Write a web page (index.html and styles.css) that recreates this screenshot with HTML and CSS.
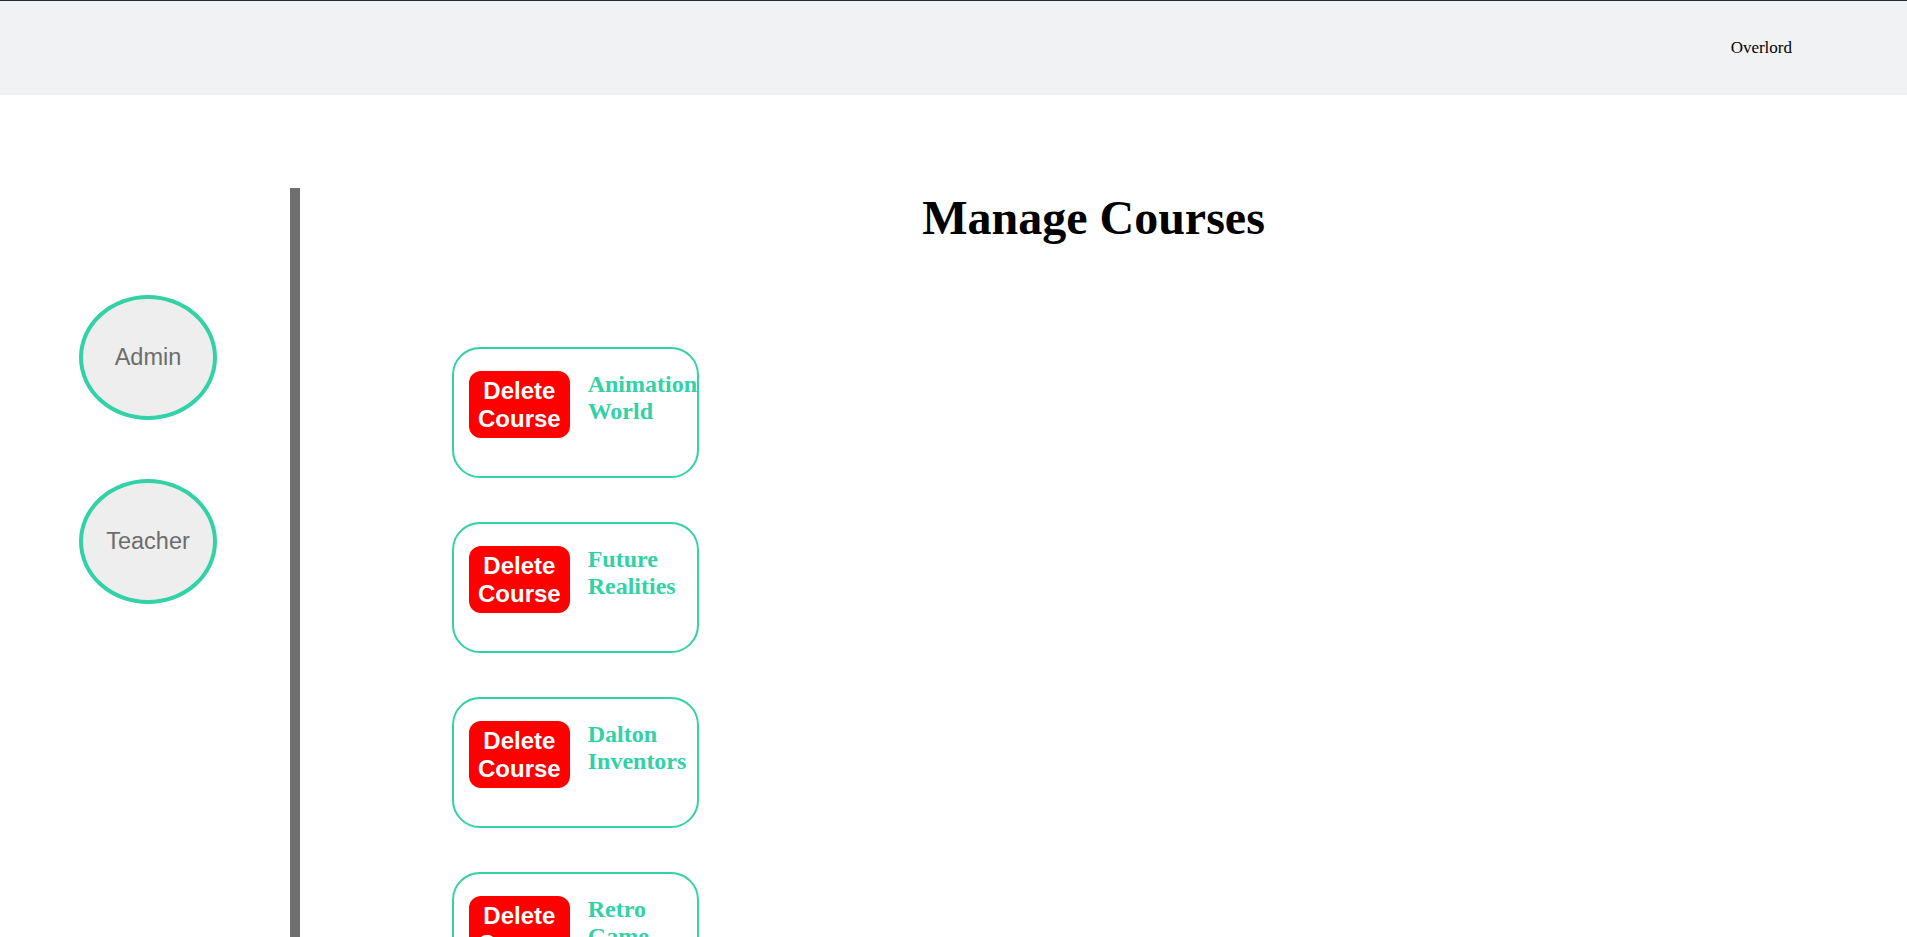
FILE: index.html
```html
<!DOCTYPE html>
<html lang="en">
<head>
<meta charset="utf-8">
<title>Manage Courses</title>
<link rel="stylesheet" href="styles.css">
</head>
<body>
<header class="topbar">
  <span class="user">Overlord</span>
</header>
<div class="layout">
  <nav class="sidebar">
    <div class="role">Admin</div>
    <div class="role">Teacher</div>
  </nav>
  <div class="divider"></div>
  <main class="main">
    <h1 class="title">Manage Courses</h1>
    <div class="courses">
      <div class="card">
        <button class="delete">Delete Course</button>
        <div class="name">Animation World</div>
      </div>
      <div class="card">
        <button class="delete">Delete Course</button>
        <div class="name">Future Realities</div>
      </div>
      <div class="card">
        <button class="delete">Delete Course</button>
        <div class="name">Dalton Inventors</div>
      </div>
      <div class="card">
        <button class="delete">Delete Course</button>
        <div class="name">Retro Game Design</div>
      </div>
      <div class="card">
        <button class="delete">Delete Course</button>
        <div class="name">Coding Club</div>
      </div>
    </div>
  </main>
</div>
</body>
</html>
```

FILE: styles.css
```css
html::-webkit-scrollbar {
  width: 4px;
}
html::-webkit-scrollbar-track {
  background: #f0f0f0;
}
html::-webkit-scrollbar-thumb {
  background: #c1c1c1;
}

body {
  margin: 0;
  font-family: "Liberation Serif", "Times New Roman", serif;
  background: #ffffff;
}

.topbar {
  border-top: 1px solid #1e2d3a;
  background: #f0f2f4;
  height: 94px;
  display: flex;
  justify-content: flex-end;
  align-items: center;
  padding-right: 115px;
}

.user {
  font-size: 17px;
  color: #000;
}

.layout {
  display: flex;
  margin-top: 93px;
}

.sidebar {
  width: 211px;
  padding-left: 79px;
  padding-top: 107px;
  display: flex;
  flex-direction: column;
  gap: 59px;
}

.role {
  width: 130px;
  height: 117px;
  border: 4px solid #33d1a6;
  border-radius: 50%;
  background: #eeeeee;
  color: #6d6d6d;
  font-family: "Liberation Sans", Arial, sans-serif;
  font-size: 23.5px;
  display: flex;
  align-items: center;
  justify-content: center;
}

.divider {
  width: 10px;
  background: #6f6f6f;
  min-height: 1035px;
}

.main {
  flex: 1;
  padding-right: 20px;
}

.title {
  margin: 2px 0 0;
  text-align: center;
  font-size: 48px;
  font-weight: bold;
  color: #000;
}

.courses {
  margin-top: 102px;
  padding-left: 152px;
  display: flex;
  flex-direction: column;
  gap: 44px;
  padding-bottom: 44px;
}

.card {
  box-sizing: border-box;
  width: 247px;
  height: 131px;
  border: 2px solid #33d1a6;
  border-radius: 28px;
  padding: 22px 0 0 15px;
  display: flex;
  align-items: flex-start;
}

.delete {
  flex: none;
  width: min-content;
  background: #ff0000;
  color: #ffffff;
  border: none;
  border-radius: 12px;
  font-family: "Liberation Sans", Arial, sans-serif;
  font-weight: bold;
  font-size: 24px;
  line-height: normal;
  padding: 5.5px 9px;
  margin: 0 18px 0 0;
  text-align: center;
}

.name {
  flex: 1;
  min-width: 0;
  font-family: "Liberation Serif", "Times New Roman", serif;
  font-weight: bold;
  font-size: 24px;
  color: #33d1a6;
}
```
